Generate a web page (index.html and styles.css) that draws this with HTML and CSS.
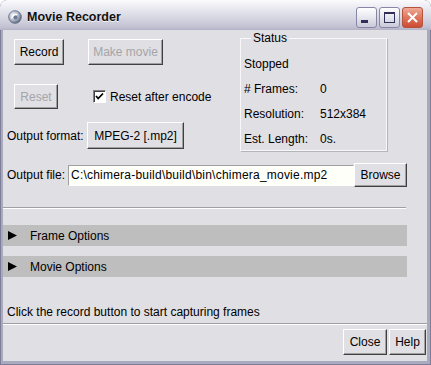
FILE: index.html
```html
<html>
  <head>
    <title>Movie Recorder</title>
    <meta charset="UTF-8" />
    <link rel="stylesheet" href="styles.css">
  </head>
  <body>
    <div class="window">
      <div class="titlebar">
        <svg class="app-icon" width="14" height="14" viewBox="0 0 14 14">
          <defs>
            <radialGradient id="globe" cx="0.35" cy="0.35" r="0.7">
              <stop offset="0" stop-color="#f4f6fb" />
              <stop offset="0.6" stop-color="#aab3c4" />
              <stop offset="1" stop-color="#5d677c" />
            </radialGradient>
          </defs>
          <circle cx="7" cy="7" r="6.3" fill="url(#globe)" stroke="#5a6478" stroke-width="0.8" />
          <path d="M3.5 8.5 Q5 4 9.5 4.5" fill="none" stroke="#ffffff" stroke-width="1.2" />
          <circle cx="7.5" cy="7.5" r="2" fill="#6c7890" />
        </svg>
        <span class="title">Movie Recorder</span>
        <div class="caption-buttons">
          <span class="cap">
            <svg width="21" height="21" viewBox="0 0 21 21"><rect x="5" y="13" width="7" height="3" fill="#2f2f5a" /></svg>
          </span>
          <span class="cap">
            <svg width="21" height="21" viewBox="0 0 21 21"><rect x="5.5" y="5.5" width="10" height="10" fill="none" stroke="#2f2f5a" /><rect x="5" y="5" width="11" height="2" fill="#2f2f5a" /></svg>
          </span>
          <span class="cap close">
            <svg width="21" height="21" viewBox="0 0 21 21"><path d="M6 6 L15 15 M15 6 L6 15" stroke="#ffffff" stroke-width="2" /></svg>
          </span>
        </div>
      </div>

      <div class="content">
        <div class="top">
          <div class="controls">
            <div class="row row-record">
              <button class="btn btn-record">Record</button>
              <button class="btn btn-make" disabled>Make movie</button>
            </div>
            <div class="row row-reset">
              <button class="btn btn-reset" disabled>Reset</button>
              <label class="check">
                <span class="box">
                  <svg width="9" height="9" viewBox="0 0 9 9"><path d="M1 4 L3.2 6.5 L8 1.5" fill="none" stroke="#000" stroke-width="1.8" /></svg>
                </span>
                Reset after encode
              </label>
            </div>
            <div class="row row-format">
              <span class="format-label">Output format:</span>
              <button class="btn btn-format">MPEG-2 [.mp2]</button>
            </div>
          </div>

          <fieldset class="status">
            <legend>Status</legend>
            <div class="stat">Stopped</div>
            <div class="stat"><span class="key"># Frames:</span><span>0</span></div>
            <div class="stat"><span class="key">Resolution:</span><span>512x384</span></div>
            <div class="stat"><span class="key">Est. Length:</span><span>0s.</span></div>
          </fieldset>
        </div>

        <div class="file-row">
          <span class="file-label">Output file:</span>
          <input class="path" type="text" value="C:\chimera-build\build\bin\chimera_movie.mp2" />
          <button class="btn btn-browse">Browse</button>
        </div>

        <div class="rule"></div>

        <div class="section">
          <svg width="9" height="9" viewBox="0 0 9 9"><polygon points="0,0 9,4.5 0,9" fill="#000" /></svg>
          <span>Frame Options</span>
        </div>
        <div class="section">
          <svg width="9" height="9" viewBox="0 0 9 9"><polygon points="0,0 9,4.5 0,9" fill="#000" /></svg>
          <span>Movie Options</span>
        </div>

        <div class="message">Click the record button to start capturing frames</div>
        <div class="footer-rule"></div>
        <div class="footer">
          <button class="btn btn-close">Close</button>
          <button class="btn btn-help">Help</button>
        </div>
      </div>
    </div>
  </body>
</html>
```

FILE: styles.css
```css
* {
  box-sizing: border-box;
}

body {
  margin: 0;
  background: #ffffff;
  font-family: "Liberation Sans", Arial, sans-serif;
  font-size: 12px;
  color: #000000;
}

.window {
  width: 431px;
  height: 365px;
  display: flex;
  flex-direction: column;
  background: #a9a9c0;
  border-radius: 7px 7px 0 0;
  box-shadow: inset 0 0 0 1px #7d7d98;
  overflow: hidden;
}

/* Title bar */
.titlebar {
  height: 30px;
  flex-shrink: 0;
  display: flex;
  align-items: center;
  padding: 3px 8px 0 8px;
  background: linear-gradient(#fbfbfd 0%, #ebebf2 25%, #d6d6e2 60%, #c2c2d3 90%, #b3b3c6 100%);
}

.app-icon {
  margin-right: 5px;
}

.title {
  flex: 1;
  font-family: "Liberation Sans", Arial, sans-serif;
  font-size: 12.5px;
  font-weight: bold;
  color: #111111;
  text-shadow: 0 1px 0 #f4f4f8;
}

.caption-buttons {
  display: flex;
  gap: 2px;
  margin-top: 1px;
}

.cap {
  width: 21px;
  height: 21px;
  display: flex;
  border: 1px solid #8786a6;
  border-radius: 3px;
  background: linear-gradient(#ffffff 0%, #e6e6ee 50%, #c9c9d8 100%);
  overflow: hidden;
}

.cap svg {
  margin: -1px;
}

.cap.close {
  border-color: #b4533e;
  background: linear-gradient(#eeaa98 0%, #e07a62 45%, #cd4b32 100%);
}

/* Body */
.content {
  flex: 1;
  margin: 0 4px 4px 3px;
  background: #e0dfe3;
  display: flex;
  flex-direction: column;
}

.btn {
  font-family: inherit;
  font-size: 12px;
  color: #000000;
  background: #e0dfe3;
  padding: 0;
  height: 100%;
  border: 1px solid;
  border-color: #ffffff #404040 #404040 #ffffff;
  box-shadow: inset -1px -1px 0 #a0a0a0;
}

.btn:disabled {
  color: #a5a5a8;
}

.top {
  display: flex;
  height: 121px;
}

.controls {
  width: 237px;
  padding-top: 9px;
}

.row {
  display: flex;
  align-items: center;
}

.row-record {
  height: 26px;
  margin-left: 11px;
  gap: 24px;
}

.btn-record {
  width: 50px;
}

.btn-make {
  width: 75px;
}

.row-reset {
  height: 25px;
  margin: 19px 0 0 11px;
}

.btn-reset {
  width: 44px;
}

.check {
  display: flex;
  align-items: center;
  gap: 4px;
  margin-left: 35px;
}

.box {
  width: 13px;
  height: 13px;
  display: flex;
  align-items: center;
  justify-content: center;
  background: #ffffff;
  border: 1px solid;
  border-color: #808080 #ffffff #ffffff #808080;
  box-shadow: inset 1px 1px 0 #404040;
}

.row-format {
  height: 27px;
  margin: 13px 0 0 4px;
}

.format-label {
  width: 80px;
}

.btn-format {
  width: 97px;
}

/* Status box */
.status {
  width: 147px;
  height: 120px;
  margin: 1px 0 0 0;
  padding: 6px 3px 0 3px;
  border: 1px solid #f8f8fa;
  box-shadow: 1px 1px 0 #b4b4b8;
}

.status legend {
  margin-left: 7px;
  padding: 0 2px;
  line-height: 14px;
}

.stat {
  height: 25px;
  display: flex;
  align-items: center;
}

.key {
  width: 76px;
}

/* Output file */
.file-row {
  height: 24px;
  display: flex;
  align-items: center;
  margin: 12px 0 0 4px;
}

.file-label {
  width: 61px;
}

.path {
  width: 286px;
  height: 21px;
  padding: 0 2px;
  font-family: inherit;
  font-size: 12px;
  letter-spacing: 0.22px;
  color: #000000;
  background: #fffffa;
  border: 1px solid;
  border-color: #a0a0a0 #ffffff #ffffff #a0a0a0;
  outline: none;
}

.btn-browse {
  width: 53px;
}

.rule {
  width: 403px;
  margin-top: 20px;
  border-top: 1px solid #a0a0a4;
  border-bottom: 1px solid #ffffff;
}

/* Collapsible sections */
.section {
  width: 404px;
  height: 21px;
  display: flex;
  align-items: center;
  gap: 13px;
  padding-left: 5px;
  margin-top: 16px;
  background: #bebebe;
}

.section + .section {
  margin-top: 10px;
}

.message {
  margin-top: auto;
  padding-left: 4px;
  line-height: 14px;
}

.footer-rule {
  margin-top: 4px;
  border-top: 1px solid #a0a0a4;
  border-bottom: 1px solid #ffffff;
}

.footer {
  height: 26px;
  display: flex;
  justify-content: flex-end;
  gap: 2px;
  margin: 4px 1px 6px 0;
}

.btn-close {
  width: 44px;
}

.btn-help {
  width: 37px;
}
```
